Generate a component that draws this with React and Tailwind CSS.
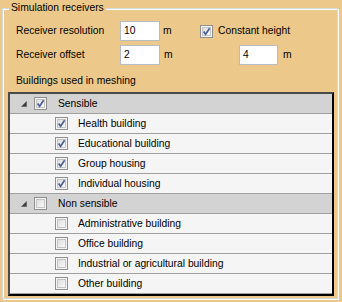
const FONT = { fontFamily: '"Liberation Sans", Arial, sans-serif' };

const groups = [
  {
    name: "Sensible",
    checked: true,
    items: ["Health building", "Educational building", "Group housing", "Individual housing"],
  },
  {
    name: "Non sensible",
    checked: false,
    items: [
      "Administrative building",
      "Office building",
      "Industrial or agricultural building",
      "Other building",
    ],
  },
];

function Check({ checked }) {
  return (
    <svg width="13" height="13" viewBox="0 0 13 13" className="shrink-0 block">
      <defs>
        <linearGradient id="cbg" x1="0" y1="0" x2="1" y2="1">
          <stop offset="0" stopColor="#dcdcdc" />
          <stop offset="1" stopColor="#fbfbfb" />
        </linearGradient>
      </defs>
      <rect x="0.5" y="0.5" width="12" height="12" fill="#f4f4f4" stroke="#8f8f8f" />
      <rect x="2.5" y="2.5" width="8" height="8" fill="url(#cbg)" stroke="#c4c4c4" />
      {checked && (
        <path d="M3.6 6.4 L5.6 9.2 L9.6 3.2" fill="none" stroke="#4b5e97" strokeWidth="1.7" />
      )}
    </svg>
  );
}

function Expander() {
  return (
    <svg width="6" height="6" viewBox="0 0 6 6" className="block">
      <polygon points="5.5,0.5 5.5,5.5 0.5,5.5" fill="#3c3c3c" stroke="#595959" strokeWidth="0.6" />
    </svg>
  );
}

function Field({ value, w }) {
  return (
    <div className={`${w} h-[20px] bg-white border border-[#b5bcc4] flex items-center pl-[3px] text-black`}>
      {value}
    </div>
  );
}

export default function App() {
  return (
    <div className="w-[342px] h-[302px] bg-[#ecc98a] overflow-hidden text-[10.3px] leading-[12px] text-black" style={FONT}>
      <div className="relative ml-[2px] mt-[8px] w-[336px] h-[291px] border border-[#d3dbe0] shadow-[inset_1px_1px_0_#fff,1px_1px_0_#fff]">
        <span className="absolute left-[6px] -top-[7px] bg-[#ecc98a] px-[2px]">Simulation receivers</span>

        <div className="flex flex-col pt-[12px]">
          <div className="flex items-center h-[20px] pl-[13px]">
            <span className="w-[104px]">Receiver resolution</span>
            <Field value="10" w="w-[40px]" />
            <span className="w-[40px] pl-[3px]">m</span>
            <Check checked />
            <span className="ml-[5px]">Constant height</span>
          </div>

          <div className="flex items-center h-[20px] mt-[4px] pl-[13px]">
            <span className="w-[104px]">Receiver offset</span>
            <Field value="2" w="w-[40px]" />
            <span className="w-[79px] pl-[4px]">m</span>
            <Field value="4" w="w-[39px]" />
            <span className="pl-[5px]">m</span>
          </div>

          <div className="pl-[13px] mt-[10px]">Buildings used in meshing</div>

          <div className="ml-[5px] mt-[5px] w-[326px] h-[204px] border-2 border-t-[#4a4a4a] border-l-[#4a4a4a] border-r-black border-b-black">
            {groups.map((g) => (
              <div key={g.name}>
                <div className="h-[20px] bg-[#d3d3d3] border-b border-[#a0a0a0] flex items-center">
                  <span className="ml-[11px] w-[13px]">
                    <Expander />
                  </span>
                  <Check checked={g.checked} />
                  <span className="ml-[11px]">{g.name}</span>
                </div>
                {g.items.map((it) => (
                  <div key={it} className="h-[20px] bg-[#f5f5f5] border-b border-[#a0a0a0] flex items-center pl-[45px]">
                    <Check checked={g.checked} />
                    <span className="ml-[10px]">{it}</span>
                  </div>
                ))}
              </div>
            ))}
          </div>
        </div>
      </div>
    </div>
  );
}
